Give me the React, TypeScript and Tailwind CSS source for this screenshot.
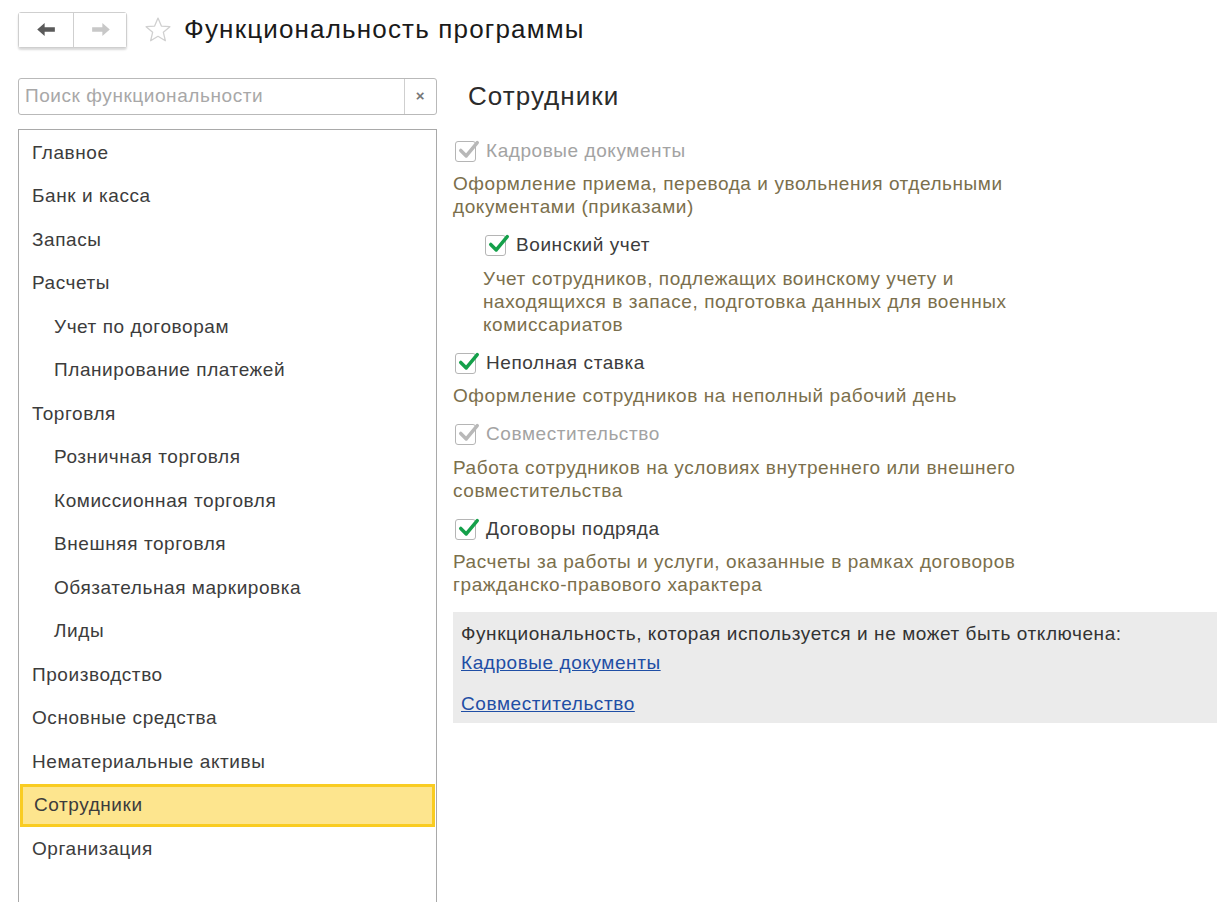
import React from "react";

const FONT = { fontFamily: '"Liberation Sans", Arial, sans-serif', letterSpacing: "0.03em" };

const sections: { label: string; sub?: boolean; active?: boolean }[] = [
  { label: "Главное" },
  { label: "Банк и касса" },
  { label: "Запасы" },
  { label: "Расчеты" },
  { label: "Учет по договорам", sub: true },
  { label: "Планирование платежей", sub: true },
  { label: "Торговля" },
  { label: "Розничная торговля", sub: true },
  { label: "Комиссионная торговля", sub: true },
  { label: "Внешняя торговля", sub: true },
  { label: "Обязательная маркировка", sub: true },
  { label: "Лиды", sub: true },
  { label: "Производство" },
  { label: "Основные средства" },
  { label: "Нематериальные активы" },
  { label: "Сотрудники", active: true },
  { label: "Организация" },
];

function Check({ disabled }: { disabled?: boolean }) {
  return (
    <span className="relative inline-block h-[21px] w-[21px] shrink-0 rounded-[3px] border border-[#b5b5b5] bg-white">
      <svg viewBox="0 0 24 24" className="absolute left-[2px] top-[-3px] h-[22px] w-[22px]">
        <path
          d="M3 12.5 L9 18.5 L21 4"
          fill="none"
          stroke={disabled ? "#b8b8b8" : "#14a04a"}
          strokeWidth="3.8"
          strokeLinecap="round"
          strokeLinejoin="round"
        />
      </svg>
    </span>
  );
}

function Option({
  label,
  desc,
  disabled,
  indent,
}: {
  label: string;
  desc: string[];
  disabled?: boolean;
  indent?: boolean;
}) {
  return (
    <div className={indent ? "pl-[30px]" : ""}>
      <div className="flex h-[24px] items-center gap-[10px] pl-[2px]">
        <Check disabled={disabled} />
        <span className={disabled ? "text-[#a3a3a3]" : "text-[#3c3c3c]"}>{label}</span>
      </div>
      <div className="mt-[9px] text-[#7b6f4c] leading-[23px]">
        {desc.map((d) => (
          <div key={d}>{d}</div>
        ))}
      </div>
    </div>
  );
}

export default function App() {
  return (
    <div className="h-[902px] w-[1219px] overflow-hidden bg-white text-[19px] text-[#3c3c3c]" style={FONT}>
      <div className="flex items-center pl-[18px] pt-[10px]">
        <div className="flex h-[36px] w-[109px] rounded-[3px] border border-[#cfcfcf] bg-[#f8f8f8] shadow-[0_2px_2px_rgba(0,0,0,0.15)]">
          <div className="flex w-[55px] items-center justify-center border-r border-[#cfcfcf] bg-white">
            <svg viewBox="0 0 20 14" className="h-[13px] w-[19px]">
              <path d="M0 7 L8 0 L8 4.5 L19 4.5 L19 9.5 L8 9.5 L8 14 Z" fill="#5a5a5a" />
            </svg>
          </div>
          <div className="flex flex-1 items-center justify-center bg-white">
            <svg viewBox="0 0 20 14" className="h-[13px] w-[19px]">
              <path d="M20 7 L12 0 L12 4.5 L1 4.5 L1 9.5 L12 9.5 L12 14 Z" fill="#c8c8c8" />
            </svg>
          </div>
        </div>
        <svg viewBox="0 0 24 24" className="ml-[17px] h-[28px] w-[28px]">
          <path
            d="M12 1.8 L14.9 8.6 L22.2 9.2 L16.6 14 L18.3 21.2 L12 17.4 L5.7 21.2 L7.4 14 L1.8 9.2 L9.1 8.6 Z"
            fill="none"
            stroke="#d0d0d0"
            strokeWidth="1.1"
            strokeLinejoin="round"
          />
        </svg>
        <h1 className="ml-[12px] text-[26px] tracking-[0.045em] text-[#1a1a1a]">Функциональность программы</h1>
      </div>

      <div className="mt-[29px] flex">
        <div className="w-[437px] shrink-0 pl-[18px]">
          <div className="flex h-[37px] rounded-[3px] border border-[#b9b9b9] bg-white">
            <div className="flex flex-1 items-center pl-[6px] text-[#a8a8a8]">Поиск функциональности</div>
            <div className="flex w-[32px] items-center justify-center border-l border-[#cfcfcf] text-[15px] font-bold text-[#777]">
              ×
            </div>
          </div>
          <div className="mt-[14px] h-[800px] border border-[#a9a9a9] pt-[1px]">
            {sections.map((s) =>
              s.active ? (
                <div
                  key={s.label}
                  className="mx-[1px] flex h-[43.5px] items-center border-[3px] border-[#f9cc22] bg-[#fde58e] pl-[11px]"
                >
                  {s.label}
                </div>
              ) : (
                <div
                  key={s.label}
                  className={`flex h-[43.5px] items-center ${s.sub ? "pl-[35px]" : "pl-[13px]"}`}
                >
                  {s.label}
                </div>
              )
            )}
          </div>
        </div>

        <div className="ml-[16px] flex-1 pr-[2px]">
          <h2 className="ml-[15px] mt-[1px] text-[26px] leading-[34px] tracking-[0.04em] text-[#2b2b2b]">Сотрудники</h2>
          <div className="mt-[26px] flex flex-col gap-[15.5px]">
            <Option
              disabled
              label="Кадровые документы"
              desc={["Оформление приема, перевода и увольнения отдельными", "документами (приказами)"]}
            />
            <Option
              indent
              label="Воинский учет"
              desc={[
                "Учет сотрудников, подлежащих воинскому учету и",
                "находящихся в запасе, подготовка данных для военных",
                "комиссариатов",
              ]}
            />
            <Option label="Неполная ставка" desc={["Оформление сотрудников на неполный рабочий день"]} />
            <Option
              disabled
              label="Совместительство"
              desc={["Работа сотрудников на условиях внутреннего или внешнего", "совместительства"]}
            />
            <Option
              label="Договоры подряда"
              desc={["Расчеты за работы и услуги, оказанные в рамках договоров", "гражданско-правового характера"]}
            />
          </div>
          <div className="mt-[16px] h-[111px] bg-[#ebebeb] pl-[8px] pt-[8px]">
            <div className="text-[#333]">Функциональность, которая используется и не может быть отключена:</div>
            <div className="mt-[0px] text-[#1f4ea5] underline">Кадровые документы</div>
            <div className="mt-[13px] text-[#1f4ea5] underline">Совместительство</div>
          </div>
        </div>
      </div>
    </div>
  );
}
